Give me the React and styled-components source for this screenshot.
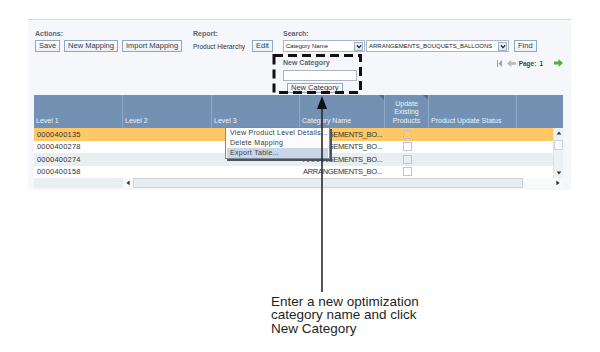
import React from 'react';
import styled, { createGlobalStyle, css } from 'styled-components';

const Global = createGlobalStyle`
  html, body { margin: 0; padding: 0; background: #fff; }
  body { font-family: "Liberation Sans", Arial, sans-serif; }
  * { box-sizing: border-box; }
`;

const COLS = '89px 89px 88px 85px 44px 88px 36px';

const Page = styled.div`
  position: relative;
  width: 600px;
  height: 352px;
  padding-top: 19px;
  overflow: hidden;
`;

const Panel = styled.section`
  margin-left: 28px;
  width: 543px;
  border-top: 1px solid #d3d8e0;
  background: #f5f7fb;
  padding: 0 8px 2px 6px;
`;

const Toolbar = styled.div`
  display: flex;
  height: 75px;
  padding: 10px 0 0 1px;
`;

const Group = styled.div`
  display: flex;
  flex-direction: column;
  width: ${p => (p.$w ? `${p.$w}px` : 'auto')};
  flex: ${p => (p.$w ? 'none' : '1')};
`;

const Label = styled.div`
  height: 8px;
  line-height: 8px;
  margin-bottom: 2px;
  font-size: 7px;
  font-weight: bold;
  color: #5b6472;
`;

const Line = styled.div`
  display: flex;
  align-items: center;
  gap: ${p => p.$gap ?? 4}px;
  height: 12px;
`;

const Button = styled.button`
  height: ${p => p.$h ?? 12}px;
  padding: 0 3px;
  margin: 0;
  border: 1px solid #8fa7c9;
  background: linear-gradient(#ffffff, #eaeff6);
  font-family: "Liberation Sans", Arial, sans-serif;
  font-size: 7.5px;
  line-height: 10px;
  color: #2c3a50;
  white-space: nowrap;
  border-radius: 0;
`;

const FindButton = styled(Button)`
  margin-left: 4px;
`;

const PlainText = styled.span`
  width: ${p => p.$w}px;
  font-size: 6.5px;
  color: #2a2f36;
  white-space: nowrap;
`;

const Select = styled.div`
  display: flex;
  align-items: center;
  width: ${p => p.$w}px;
  height: 12px;
  padding-right: 1px;
  border: 1px solid #a7b6c9;
  background: #fff;
`;

const SelectText = styled.span`
  flex: 1;
  padding-left: 2px;
  font-size: 6px;
  line-height: 10px;
  color: #222;
  white-space: nowrap;
  overflow: hidden;
`;

const SelectArrow = styled.span`
  display: flex;
  align-items: center;
  justify-content: center;
  width: 9px;
  height: 9px;
  border: 1px solid #9fb0c6;
  background: linear-gradient(#f7f9fc, #dde5ef);
`;

const SubRow = styled.div`
  display: flex;
  justify-content: space-between;
  align-items: flex-start;
  margin-top: 7px;
`;

const NewCat = styled.div`
  display: flex;
  flex-direction: column;
  width: 74px;
`;

const NewCatInput = styled.input`
  width: 74px;
  height: 11px;
  margin: 1px 0 0;
  padding: 0;
  border: 1px solid #a7b6c9;
  background: #fff;
`;

const NewCatButton = styled(Button)`
  align-self: flex-start;
  margin: 2px 0 0 4px;
  line-height: 8px;
`;

const Pager = styled.div`
  display: flex;
  align-items: center;
  height: 8px;
  gap: 3px;
  font-size: 6.5px;
  font-weight: bold;
  color: #3a4350;
`;

const PageNum = styled.span`
  margin-right: 8px;
`;

const Table = styled.div`
  width: 529px;
`;

const HeaderRow = styled.div`
  display: grid;
  grid-template-columns: 89px 89px 88px 85px 44px 88px 46px;
  height: 33px;
  background: #7391b3;
`;

const HeadCell = styled.div`
  position: relative;
  display: flex;
  align-items: flex-end;
  justify-content: ${p => (p.$center ? 'center' : 'flex-start')};
  text-align: ${p => (p.$center ? 'center' : 'left')};
  padding: 0 2px 2px;
  border-right: ${p => (p.$last ? 'none' : '1px solid #8eaac6')};
  color: #eef3f9;
  font-size: 7px;
  line-height: 8.8px;
  ${p =>
    p.$sort &&
    css`
      &::after {
        content: '';
        position: absolute;
        top: 0;
        right: 0;
        border-style: solid;
        border-width: 0 5px 5px 0;
        border-color: transparent #4f6d8e transparent transparent;
      }
    `}
`;

const Body = styled.div`
  display: flex;
`;

const Rows = styled.div`
  width: 519px;
`;

const Row = styled.div`
  display: grid;
  grid-template-columns: ${COLS};
  height: 12.5px;
  background: ${p =>
    p.$tone === 'sel' ? '#fdc865' : p.$tone === 'alt' ? '#e9eff0' : '#ffffff'};
`;

const Cell = styled.div`
  display: flex;
  align-items: center;
  justify-content: ${p => (p.$center ? 'center' : 'flex-start')};
  padding-left: ${p => (p.$center ? 0 : 3)}px;
  font-size: 7.5px;
  letter-spacing: ${p => (p.$tight ? '-0.3px' : '0.2px')};
  color: #333;
  white-space: nowrap;
  overflow: hidden;
`;

const Check = styled.span`
  width: 9px;
  height: 9px;
  border: 1px solid #bcc6cf;
`;

const VScroll = styled.div`
  display: flex;
  flex-direction: column;
  width: 10px;
  background: #eef1f4;
  border-left: 1px solid #dfe4e9;
`;

const ScrollBtn = styled.div`
  display: flex;
  align-items: center;
  justify-content: center;
  width: ${p => (p.$w ? `${p.$w}px` : 'auto')};
  height: 10px;
`;

const VThumb = styled.div`
  height: 10px;
  margin-top: 2px;
  border: 1px solid #cdd5dc;
  background: #f7f9fa;
`;

const Fill = styled.div`
  flex: 1;
`;

const HScrollRow = styled.div`
  display: flex;
  height: 10px;
`;

const Frozen = styled.div`
  width: 89px;
  background: #e9eff0;
`;

const HTrack = styled.div`
  flex: 1;
  display: flex;
  align-items: stretch;
  background: #f7f9fa;
`;

const HThumb = styled.div`
  width: 390px;
  border: 1px solid #cbd4db;
  background: #e6ecef;
`;

const Menu = styled.ul`
  position: absolute;
  left: 225px;
  top: 127px;
  width: 105px;
  margin: 0;
  padding: 0 1px;
  list-style: none;
  background: #fbfbfc;
  border: 1px solid #7f8a96;
  box-shadow: 2px 2px 0 #4f545b;
`;

const MenuItem = styled.li`
  height: 10px;
  line-height: 10px;
  padding-left: 3px;
  font-size: 7px;
  letter-spacing: 0.3px;
  color: #3a3f45;
  white-space: nowrap;
  overflow: hidden;
  background: ${p => (p.$active ? '#c8d7e7' : 'transparent')};
`;

const Overlay = styled.svg`
  position: absolute;
  left: 0;
  top: 0;
  pointer-events: none;
`;

const Note = styled.p`
  margin: 105px 0 0 271px;
  font-family: "Liberation Sans", Arial, sans-serif;
  font-size: 13.5px;
  line-height: 13.4px;
  color: #1f1f1f;
`;

const Chevron = () => (
  <svg width="6" height="5" viewBox="0 0 6 5">
    <path d="M0.8 1.2 L3 3.6 L5.2 1.2" fill="none" stroke="#222" strokeWidth="1.3" />
  </svg>
);

const Tri = ({ dir }) => {
  const d = {
    up: 'M0 4 L3 0 L6 4Z',
    down: 'M0 0 L6 0 L3 4Z',
    left: 'M4 0 L4 6 L0 3Z',
    right: 'M0 0 L4 3 L0 6Z',
  }[dir];
  const horiz = dir === 'left' || dir === 'right';
  return (
    <svg width={horiz ? 4 : 6} height={horiz ? 6 : 4} viewBox={horiz ? '0 0 4 6' : '0 0 6 4'}>
      <path d={d} fill="#333" transform={horiz ? 'scale(0.8) translate(0.5 0.7)' : 'scale(0.8) translate(0.7 0.5)'} />
    </svg>
  );
};

const rows = [
  { id: '0000400135', tone: 'sel' },
  { id: '0000400278', tone: 'plain' },
  { id: '0000400274', tone: 'alt' },
  { id: '0000400158', tone: 'plain' },
];

export default function App() {
  return (
    <Page>
      <Global />
      <Panel>
        <Toolbar>
          <Group $w={158}>
            <Label>Actions:</Label>
            <Line>
              <Button>Save</Button>
              <Button>New Mapping</Button>
              <Button>Import Mapping</Button>
            </Line>
          </Group>
          <Group $w={90}>
            <Label>Report:</Label>
            <Line $gap={0}>
              <PlainText $w={59}>Product Hierarchy</PlainText>
              <Button>Edit</Button>
            </Line>
          </Group>
          <Group>
            <Label>Search:</Label>
            <Line $gap={1}>
              <Select $w={82}>
                <SelectText>Category Name</SelectText>
                <SelectArrow><Chevron /></SelectArrow>
              </Select>
              <Select $w={143}>
                <SelectText>ARRANGEMENTS_BOUQUETS_BALLOONS</SelectText>
                <SelectArrow><Chevron /></SelectArrow>
              </Select>
              <FindButton>Find</FindButton>
            </Line>
            <SubRow>
              <NewCat>
                <Label>New Category</Label>
                <NewCatInput type="text" />
                <NewCatButton $h={10}>New Category</NewCatButton>
              </NewCat>
              <Pager>
                <svg width="5" height="7" viewBox="0 0 5 7">
                  <rect x="0" y="0" width="1" height="7" fill="#9aa3ad" />
                  <path d="M5 0 L5 7 L1.5 3.5Z" fill="#9aa3ad" />
                </svg>
                <svg width="9" height="7" viewBox="0 0 9 7" style={{ marginLeft: 2 }}>
                  <path d="M9 2.3 H4.2 V0 L0 3.5 L4.2 7 V4.7 H9Z" fill="#b3bcb4" />
                </svg>
                <span>Page:</span>
                <PageNum>1</PageNum>
                <svg width="9" height="8" viewBox="0 0 9 8">
                  <path d="M0 2.5 H4.5 V0 L9 4 L4.5 8 V5.5 H0Z" fill="#5fae3c" />
                </svg>
              </Pager>
            </SubRow>
          </Group>
        </Toolbar>

        <Table>
          <HeaderRow>
            <HeadCell>Level 1</HeadCell>
            <HeadCell>Level 2</HeadCell>
            <HeadCell>Level 3</HeadCell>
            <HeadCell $sort>Category Name</HeadCell>
            <HeadCell $center $sort>Update<br />Existing<br />Products</HeadCell>
            <HeadCell>Product Update Status</HeadCell>
            <HeadCell $last />
          </HeaderRow>
          <Body>
            <Rows>
              {rows.map(r => (
                <Row key={r.id} $tone={r.tone}>
                  <Cell>{r.id}</Cell>
                  <Cell />
                  <Cell />
                  <Cell $tight>ARRANGEMENTS_BO...</Cell>
                  <Cell $center><Check /></Cell>
                  <Cell />
                  <Cell />
                </Row>
              ))}
            </Rows>
            <VScroll>
              <ScrollBtn><Tri dir="up" /></ScrollBtn>
              <VThumb />
              <Fill />
              <ScrollBtn><Tri dir="down" /></ScrollBtn>
            </VScroll>
          </Body>
          <HScrollRow>
            <Frozen />
            <HTrack>
              <ScrollBtn $w={10}><Tri dir="left" /></ScrollBtn>
              <HThumb />
              <Fill />
              <ScrollBtn $w={10}><Tri dir="right" /></ScrollBtn>
            </HTrack>
          </HScrollRow>
        </Table>
      </Panel>

      <Note>
        Enter a new optimization<br />
        category name and click<br />
        New Category
      </Note>

      <Menu>
        <MenuItem>View Product Level Details...</MenuItem>
        <MenuItem>Delete Mapping</MenuItem>
        <MenuItem $active>Export Table...</MenuItem>
      </Menu>

      <Overlay width="600" height="352" viewBox="0 0 600 352">
        <rect x="274" y="55.5" width="86.5" height="37" fill="none" stroke="#111" strokeWidth="3" strokeDasharray="9 5" />
        <line x1="322" y1="106" x2="322" y2="292" stroke="#2a2a2a" strokeWidth="1.6" />
        <path d="M322 96 L317 109 L327 109Z" fill="#111" />
      </Overlay>
    </Page>
  );
}
